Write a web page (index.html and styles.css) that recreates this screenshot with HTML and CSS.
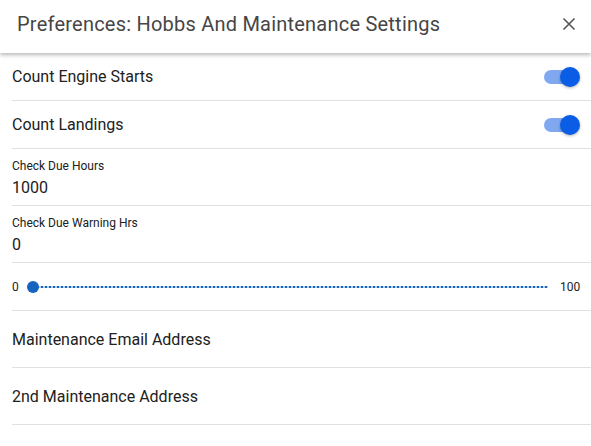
FILE: index.html
```html
<!DOCTYPE html>
<html>
<head>
<meta charset="utf-8">
<link rel="stylesheet" href="styles.css">
</head>
<body>
<div class="dialog">
  <header class="header">
    <div class="title">Preferences: Hobbs And Maintenance Settings</div>
    <button class="close" aria-label="Close">
      <svg width="14" height="14" viewBox="0 0 14 14"><path d="M1.5 1.5 L12.5 12.5 M12.5 1.5 L1.5 12.5" stroke="#555" stroke-width="1.6" fill="none"/></svg>
    </button>
  </header>
  <div class="list">
    <div class="row row-toggle">
      <span class="row-text">Count Engine Starts</span>
      <span class="switch"><span class="track"></span><span class="thumb"></span></span>
    </div>
    <div class="row row-toggle">
      <span class="row-text">Count Landings</span>
      <span class="switch"><span class="track"></span><span class="thumb"></span></span>
    </div>
    <div class="row row-field">
      <div class="field-label">Check Due Hours</div>
      <div class="field-value">1000</div>
    </div>
    <div class="row row-field">
      <div class="field-label">Check Due Warning Hrs</div>
      <div class="field-value">0</div>
    </div>
    <div class="row row-slider">
      <span class="slider-min">0</span>
      <div class="slider">
        <div class="slider-line"></div>
        <div class="slider-knob"></div>
      </div>
      <span class="slider-max">100</span>
    </div>
    <div class="row row-input">
      <span class="row-text">Maintenance Email Address</span>
    </div>
    <div class="row row-input">
      <span class="row-text">2nd Maintenance Address</span>
    </div>
  </div>
</div>
</body>
</html>
```
FILE: styles.css
```css
* { box-sizing: border-box; }
html, body {
  margin: 0;
  padding: 0;
  background: #fff;
  font-family: Roboto, "Liberation Sans", Arial, sans-serif;
  overflow: hidden;
}
.dialog {
  width: 591px;
  height: 446px;
  background: #fff;
}
.header {
  height: 53px;
  padding: 0 15px 5px 17px;
  display: flex;
  align-items: center;
  justify-content: space-between;
  box-shadow: 0 2px 4px rgba(0,0,0,0.28);
  position: relative;
  z-index: 1;
  background: #fff;
}
.title {
  font-size: 20px;
  color: #464646;
  letter-spacing: 0.22px;
}
.close {
  border: 0;
  background: transparent;
  padding: 0;
  width: 14px;
  height: 14px;
  display: flex;
}
.list {
  padding-left: 12px;
}
.row {
  border-bottom: 1px solid #e0e0e0;
  color: #212121;
}
.row-toggle {
  height: 48px;
  display: flex;
  align-items: center;
  justify-content: space-between;
  padding-right: 11px;
}
.row-text {
  font-size: 16px;
}
.switch {
  position: relative;
  width: 36px;
  height: 20px;
  display: block;
}
.track {
  position: absolute;
  left: 0;
  top: 3px;
  width: 34px;
  height: 14px;
  border-radius: 7px;
  background: #7fa8f1;
}
.thumb {
  position: absolute;
  left: 16px;
  top: 0;
  width: 20px;
  height: 20px;
  border-radius: 50%;
  background: #0b5de6;
  box-shadow: 0 1px 3px rgba(0,0,0,0.3);
}
.row-field {
  height: 57px;
  padding-top: 10px;
}
.field-label {
  font-size: 12px;
  line-height: 14px;
  margin-bottom: 5px;
}
.field-value {
  font-size: 16px;
  line-height: 19px;
}
.row-slider {
  height: 48px;
  display: flex;
  align-items: center;
  padding-right: 11px;
  font-size: 12px;
}
.slider-min {
  width: 15px;
}
.slider {
  flex: 1;
  position: relative;
  height: 12px;
  margin-right: 12px;
}
.slider-line {
  position: absolute;
  left: 6px;
  right: 0;
  top: 5px;
  height: 2px;
  background: repeating-linear-gradient(90deg, #1565c0 0 2px, #b9d0ea 2px 4px);
}
.slider-knob {
  position: absolute;
  left: 0;
  top: 0;
  width: 12px;
  height: 12px;
  border-radius: 50%;
  background: #1565c0;
}
.slider-max {
  width: 20px;
}
.row-input {
  height: 57px;
  display: flex;
  align-items: center;
}
```
